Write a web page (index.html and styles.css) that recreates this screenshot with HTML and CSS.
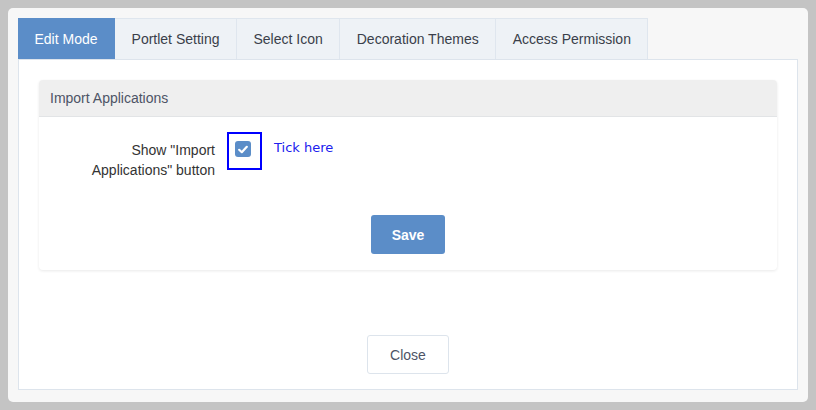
FILE: index.html
```html
<!DOCTYPE html>
<html>
<head>
<meta charset="utf-8">
<link rel="stylesheet" href="styles.css">
</head>
<body>
<div class="window">
  <div class="tabs">
    <div class="tab active">Edit Mode</div>
    <div class="tab">Portlet Setting</div>
    <div class="tab">Select Icon</div>
    <div class="tab">Decoration Themes</div>
    <div class="tab">Access Permission</div>
  </div>
  <div class="panel">
    <div class="card">
      <div class="card-header">Import Applications</div>
      <div class="card-body">
        <div class="form-row">
          <div class="label">Show "Import<br>Applications" button</div>
          <div class="highlight">
            <span class="checkbox">
              <svg width="10" height="9" viewBox="0 0 10 9"><path d="M1.2 4.8 L3.8 7.2 L8.8 1.8" fill="none" stroke="#fff" stroke-width="2.2" stroke-linecap="round" stroke-linejoin="round"/></svg>
            </span>
          </div>
          <div class="tick">Tick here</div>
        </div>
        <div class="actions">
          <button class="btn-primary">Save</button>
        </div>
      </div>
    </div>
    <div class="footer">
      <button class="btn-default">Close</button>
    </div>
  </div>
</div>
</body>
</html>
```
FILE: styles.css
```css
* { box-sizing: border-box; }
html, body { margin: 0; }
body {
  background: #c4c4c4;
  padding: 8px;
  font-family: "Liberation Sans", Arial, sans-serif;
  font-size: 14px;
  color: #4d5466;
}
.window {
  width: 800px;
  height: 394px;
  background: #f7f7f7;
  border-radius: 5px;
  padding: 10px 10px 0 10px;
}
.tabs {
  display: flex;
  height: 41px;
}
.tab {
  height: 41px;
  line-height: 40px;
  padding: 0 16.5px;
  background: #eef2f6;
  border: 1px solid #dfe6ee;
  border-bottom: none;
  border-left: none;
  color: #3a3f4a;
  white-space: nowrap;
}
.tab.active {
  background: #5b8dc8;
  border-color: #5b8dc8;
  color: #fff;
}
.panel {
  height: 331px;
  background: #fff;
  border: 1px solid #dde4ec;
  padding: 20px 20px 15px 20px;
  display: flex;
  flex-direction: column;
}
.card {
  border-radius: 4px;
  box-shadow: 0 1px 3px rgba(0,0,0,0.09);
  background: #fff;
}
.card-header {
  height: 37px;
  line-height: 36px;
  padding: 0 11px;
  background: #efefef;
  border-bottom: 1px solid #e2e4e6;
  border-radius: 4px 4px 0 0;
  color: #4d5466;
}
.card-body {
  padding: 15px 0 16px 0;
}
.form-row {
  display: flex;
  align-items: flex-start;
}
.label {
  width: 176px;
  text-align: right;
  line-height: 20px;
  padding-top: 8px;
  color: #333;
}
.highlight {
  width: 35px;
  height: 38px;
  border: 2px solid #0000ff;
  margin-left: 12px;
  padding: 7px 0 0 6px;
}
.checkbox {
  display: flex;
  align-items: center;
  justify-content: center;
  width: 16px;
  height: 16px;
  border-radius: 3px;
  background: #5b8dc8;
}
.tick {
  margin-left: 12px;
  color: #2020ee;
  font-family: "DejaVu Sans", Verdana, sans-serif;
  font-size: 13px;
  line-height: 20px;
  padding-top: 6px;
}
.actions {
  display: flex;
  justify-content: center;
  margin-top: 35px;
}
.btn-primary {
  width: 74px;
  height: 39px;
  background: #5b8dc8;
  border: none;
  border-radius: 3px;
  color: #fff;
  font-family: "Liberation Sans", Arial, sans-serif;
  font-weight: bold;
  font-size: 14px;
}
.footer {
  margin-top: auto;
  display: flex;
  justify-content: center;
}
.btn-default {
  width: 82px;
  height: 39px;
  background: #fff;
  border: 1px solid #dde4ec;
  border-radius: 3px;
  color: #4d5466;
  font-family: "Liberation Sans", Arial, sans-serif;
  font-size: 14px;
}
```
